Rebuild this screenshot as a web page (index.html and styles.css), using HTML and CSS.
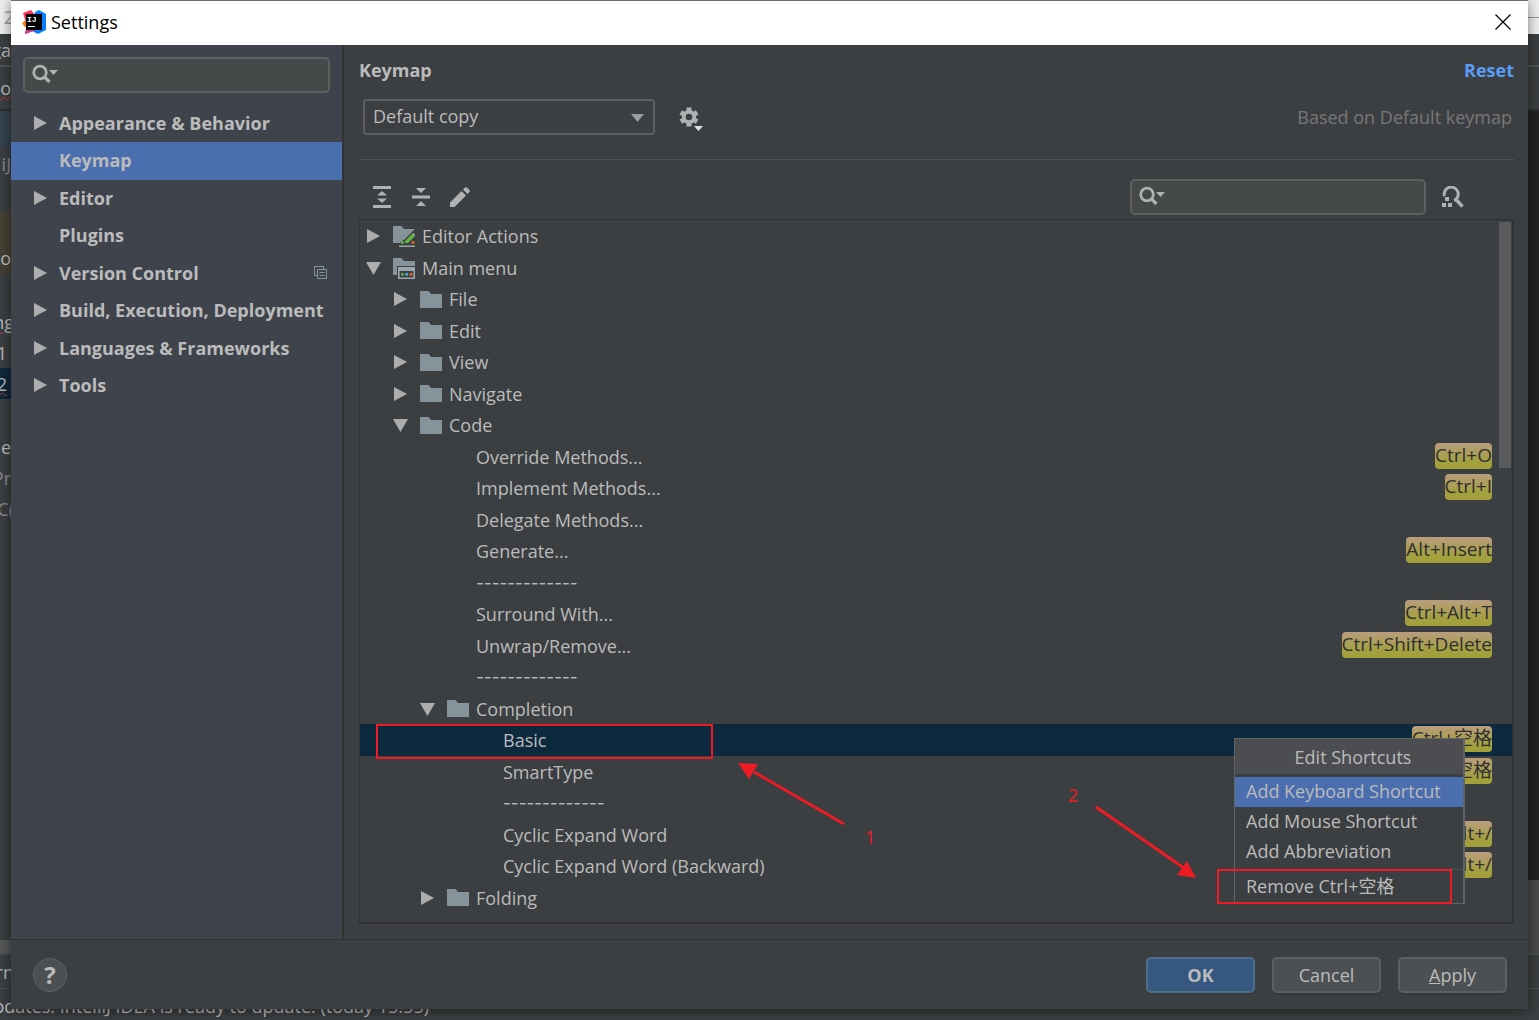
FILE: index.html
```html
<!DOCTYPE html>
<html lang="en">
<head>
<meta charset="utf-8">
<title>Settings</title>
<link rel="stylesheet" href="styles.css">
</head>
<body>
<svg class="defs" aria-hidden="true">
  <symbol id="right" viewBox="0 0 15 16"><path d="M1 1L14 8L1 15z"/></symbol>
  <symbol id="down" viewBox="0 0 15 16"><path d="M0 2H15L7.500 15z"/></symbol>
  <symbol id="folder" viewBox="0 0 22 17"><path d="M0 0H8.500L11 3H22V17H0z" fill="#87939a"/></symbol>
  <symbol id="search" viewBox="0 0 28 20"><circle cx="8" cy="8.500" r="6.300" fill="none" stroke="#afb1b3" stroke-width="2.800"/><path d="M12.500 13L17.500 18" stroke="#afb1b3" stroke-width="3.200"/><path d="M17 6H26L21.500 11z" fill="#afb1b3"/></symbol>
</svg>

<div class="backdrop" aria-hidden="true">
  <div class="edge edge-left">
    <div class="bit title-bit over">2</div>
    <div class="bit nav-bit">ga</div>
    <div class="bit tab-bit"><span class="squiggle">co</span></div>
    <div class="bit blue-bit"></div>
    <div class="bit path-bit dim">iJ</div>
    <div class="bit olive-bit">o</div>
    <div class="bit code-bit gap-above over"><span class="squiggle">ng</span></div>
    <div class="bit code-bit short">1</div>
    <div class="bit code-bit short current"><span class="squiggle">2</span></div>
    <div class="bit code-bit gap-above">ie</div>
    <div class="bit code-bit dim">Pr</div>
    <div class="bit code-bit dim over">C(</div>
    <div class="bit spacer"></div>
    <div class="bit thumb-bit"></div>
    <div class="bit tool-bit over">ern</div>
  </div>
  <div class="edge edge-right">
    <div class="bit title-bit"><i></i></div>
    <div class="bit nav-bit"></div>
    <div class="bit tab-bit"></div>
    <div class="bit dark-bit"></div>
    <div class="bit grey-bit"></div>
    <div class="bit tool-bit"></div>
  </div>
  <div class="status"><span>Updates. IntelliJ IDEA is ready to update. (today 15:55)</span></div>
</div>

<main class="dialog">
  <header class="titlebar">
    <svg class="logo" viewBox="0 0 24 24" width="24" height="24">
      <path d="M1 3L9 0L13 5L8 22L3 24L5 16z" fill="#fe315d"/>
      <path d="M0 13L5 9L8 18L3 17z" fill="#f97a12"/>
      <path d="M13 2L17 0L24 4V20L16 24L8 20z" fill="#087cfa"/>
      <path d="M3 24L4 18L14 20L9 22z" fill="#c13a8c"/>
      <rect x="4" y="4" width="16" height="16" fill="#000"/>
      <text x="5" y="12" class="logo-text">IJ</text>
      <rect x="6" y="16" width="7" height="1" fill="#fff"/>
    </svg>
    <h1>Settings</h1>
    <button class="close" aria-label="Close"><svg viewBox="0 0 16 16" width="16" height="16"><path d="M.500 .500L15.500 15.500M15.500 .500L.500 15.500" stroke="#000" stroke-width="1.200"/></svg></button>
  </header>

  <div class="columns">
    <nav class="sidebar">
      <label class="search">
        <svg width="28" height="20"><use href="#search"/></svg>
        <input type="text" aria-label="Search settings">
      </label>
      <ul class="sections">
        <li><svg class="arrow"><use href="#right"/></svg><a href="#">Appearance &amp; Behavior</a></li>
        <li class="active"><a href="#">Keymap</a></li>
        <li><svg class="arrow"><use href="#right"/></svg><a href="#">Editor</a></li>
        <li><a href="#">Plugins</a></li>
        <li><svg class="arrow"><use href="#right"/></svg><a href="#">Version Control</a>
          <svg class="project" viewBox="0 0 13 13" width="13" height="13" fill="none" stroke="#87939a"><path d="M3 9.500H.500V.500H9.500V3M3.500 3.500H12.500V12.500H3.500zM5.500 6.500H10.500M5.500 9.500H10.500"/></svg></li>
        <li><svg class="arrow"><use href="#right"/></svg><a href="#">Build, Execution, Deployment</a></li>
        <li><svg class="arrow"><use href="#right"/></svg><a href="#">Languages &amp; Frameworks</a></li>
        <li><svg class="arrow"><use href="#right"/></svg><a href="#">Tools</a></li>
      </ul>
    </nav>

    <section class="content">
      <div class="heading"><h2>Keymap</h2><a href="#" class="reset">Reset</a></div>
      <div class="scheme">
        <div class="combo">
          <select aria-label="Keymap scheme"><option>Default copy</option></select>
          <svg viewBox="0 0 13 8" width="13" height="8"><path d="M0 0H13L6.500 8z" fill="#9a9da0"/></svg>
        </div>
        <button class="icon gear" aria-label="Scheme actions">
          <svg viewBox="0 0 24 24" width="24" height="24"><g stroke="#afb1b3" stroke-width="5"><path d="M10 .500V5.500M10 14.500V19.500M1.800 5.300L6.100 7.800M13.900 12.200L18.200 14.700M1.800 14.700L6.100 12.200M13.900 7.800L18.200 5.300"/></g><circle cx="10" cy="10" r="5.200" fill="none" stroke="#afb1b3" stroke-width="3.800"/><path d="M15 19H24L19.500 24z" fill="#dfe1e3"/></svg>
        </button>
        <span class="based">Based on Default keymap</span>
      </div>
      <div class="toolbar">
        <button class="icon" aria-label="Expand all"><svg viewBox="0 0 20 22" width="20" height="22" fill="#afb1b3"><path d="M1 0H19V3H1zM1 19H19V22H1zM10 5L15 9.500H5zM10 17L15 12.500H5z"/></svg></button>
        <button class="icon" aria-label="Collapse all"><svg viewBox="0 0 20 22" width="20" height="22" fill="#afb1b3"><path d="M1 9.500H19V12.500H1zM5 2H15L10 7zM5 20H15L10 15z"/></svg></button>
        <button class="icon" aria-label="Edit shortcut"><svg viewBox="0 0 20 20" width="20" height="20" fill="#afb1b3"><path d="M0 15.500L11.500 4L16 8.500L4.500 20H0zM13 2.500L15 .500Q16 -.200 17 .500L19.500 3Q20.200 4 19.500 5L17.500 7z"/></svg></button>
        <label class="search">
          <svg width="28" height="20"><use href="#search"/></svg>
          <input type="text" aria-label="Search actions">
        </label>
        <button class="icon" aria-label="Find by shortcut"><svg viewBox="0 0 24 22" width="24" height="22"><path d="M3.500 10A7 7 0 1 1 13 14.500" fill="none" stroke="#afb1b3" stroke-width="3"/><path d="M15 13.500L21.500 20.500" stroke="#afb1b3" stroke-width="3.400"/><path d="M4 11H8V15H4zM1 17H5V21H1zM7 17H11V21H7z" fill="#afb1b3"/></svg></button>
      </div>

      <div class="tree">
        <ul class="rows">
          <li><svg class="arrow"><use href="#right"/></svg><svg class="folder" viewBox="0 0 22 22"><path d="M0 1H8.500L11 4H22L12 14L7 18H0z" fill="#87939a"/><path d="M12 16L19 9L22 11L15 18H12z" fill="#62b543"/><path d="M19 9L20.500 8L22.500 10L22 11z" fill="#9aa7b0"/><circle cx="9.500" cy="17.500" r="1.500" fill="#62b543"/><circle cx="20" cy="17.500" r="1.500" fill="#f26522"/><path d="M6 20.500H22V22H6z" fill="#9aa7b0"/></svg>Editor Actions</li>
          <li><svg class="arrow"><use href="#down"/></svg><svg class="folder" viewBox="0 0 22 22"><path d="M0 1H8.500L11 4H22V9H4V18H0z" fill="#87939a"/><path d="M5.800 10.800H21.200V21.200H5.800z" fill="#3c3f41" stroke="#9aa7b0" stroke-width="1.600"/><path d="M5 10H22V14H5z" fill="#9aa7b0"/><circle cx="9.500" cy="17.300" r="1.500" fill="#62b543"/><circle cx="13.700" cy="17.300" r="1.500" fill="#40b6e0"/><circle cx="18" cy="17.300" r="1.500" fill="#f26522"/></svg>Main menu</li>
          <li class="l1"><svg class="arrow"><use href="#right"/></svg><svg class="folder"><use href="#folder"/></svg>File</li>
          <li class="l1"><svg class="arrow"><use href="#right"/></svg><svg class="folder"><use href="#folder"/></svg>Edit</li>
          <li class="l1"><svg class="arrow"><use href="#right"/></svg><svg class="folder"><use href="#folder"/></svg>View</li>
          <li class="l1"><svg class="arrow"><use href="#right"/></svg><svg class="folder"><use href="#folder"/></svg>Navigate</li>
          <li class="l1"><svg class="arrow"><use href="#down"/></svg><svg class="folder"><use href="#folder"/></svg>Code</li>
          <li class="leaf">Override Methods...<kbd>Ctrl+O</kbd></li>
          <li class="leaf">Implement Methods...<kbd>Ctrl+I</kbd></li>
          <li class="leaf">Delegate Methods...</li>
          <li class="leaf">Generate...<kbd>Alt+Insert</kbd></li>
          <li class="leaf divider">-------------</li>
          <li class="leaf">Surround With...<kbd>Ctrl+Alt+T</kbd></li>
          <li class="leaf">Unwrap/Remove...<kbd>Ctrl+Shift+Delete</kbd></li>
          <li class="leaf divider">-------------</li>
          <li class="l2"><svg class="arrow"><use href="#down"/></svg><svg class="folder"><use href="#folder"/></svg>Completion</li>
          <li class="leaf deep selected">Basic<kbd>Ctrl+空格</kbd>
            <span class="mark mark-row"></span>
            <div class="popup" role="menu">
              <div class="popup-title">Edit Shortcuts</div>
              <button role="menuitem" class="hover">Add Keyboard Shortcut</button>
              <button role="menuitem">Add Mouse Shortcut</button>
              <button role="menuitem">Add Abbreviation</button>
              <hr>
              <button role="menuitem" class="last">Remove Ctrl+空格</button>
              <span class="mark mark-item"></span>
              <div class="callout callout-two"><span>2</span><svg viewBox="0 0 104 74" width="104" height="74"><path d="M2 2L90 63" stroke="#ed1b23" stroke-width="3"/><path d="M102 73L83 70L93 56z" fill="#ed1b23"/></svg></div>
            </div>
            <div class="callout callout-one"><svg viewBox="0 0 108 64" width="108" height="64"><path d="M106 62L16 10" stroke="#ed1b23" stroke-width="3"/><path d="M0 1L20 2L11 17z" fill="#ed1b23"/></svg><span>1</span></div>
          </li>
          <li class="leaf deep">SmartType<kbd>Ctrl+Shift+空格</kbd></li>
          <li class="leaf deep divider">-------------</li>
          <li class="leaf deep">Cyclic Expand Word<kbd>Alt+/</kbd></li>
          <li class="leaf deep">Cyclic Expand Word (Backward)<kbd>Shift+Alt+/</kbd></li>
          <li class="l2"><svg class="arrow"><use href="#right"/></svg><svg class="folder"><use href="#folder"/></svg>Folding</li>
        </ul>
        <div class="scrollbar"></div>
      </div>
    </section>
  </div>

  <footer class="footer">
    <button class="help" aria-label="Help">?</button>
    <button class="btn primary">OK</button>
    <button class="btn">Cancel</button>
    <button class="btn"><u>A</u>pply</button>
  </footer>
</main>
</body>
</html>
```

FILE: styles.css
```css
* { box-sizing: border-box; }

body {
  margin: 0;
  min-height: 100vh;
  position: relative;
  overflow: hidden;
  background: #3c3f41;
  color: #bbbbbb;
  font: 18px/24px "Open Sans", "Noto Sans CJK SC", sans-serif;
}

ul { list-style: none; margin: 0; padding: 0; }
h1, h2 { margin: 0; font-size: 18px; }
svg { display: block; flex: none; }
button, input, select { font: inherit; color: inherit; margin: 0; }
button { padding: 0; border: 0; background: none; }
a { color: inherit; text-decoration: none; }
.defs { position: absolute; width: 0; height: 0; }

/* The IDE window behind the dialog */
.backdrop {
  position: absolute;
  inset: 0;
  display: grid;
  grid-template: 1fr 31px / 11px 1fr 11px;
}
.edge { display: flex; flex-direction: column; overflow: hidden; }
.edge-right { grid-column: 3; }
.bit { display: flex; align-items: center; justify-content: flex-end; flex: none; white-space: nowrap; }
.over { margin-right: -3px; }
.short { padding-right: 4px; }
.dim { color: #8a8c8e; }
.title-bit { height: 34px; background: #f0f0f0; color: #999; }
.title-bit i { width: 100%; height: 1px; background: #999; }
.nav-bit { height: 33px; border-bottom: 2px solid #515355; }
.tab-bit { height: 44px; border-bottom: 2px solid #2d2f31; }
.blue-bit { height: 36px; background: #364350; }
.path-bit { height: 64px; align-items: flex-start; padding-top: 5px; }
.olive-bit { height: 63px; align-items: flex-end; padding-bottom: 4px; background: #454233; }
.code-bit { height: 31px; }
.gap-above { margin-top: 32px; }
.current { background: #0d293e; }
.squiggle { text-decoration: underline wavy #bc3f3c 1px; }
.spacer { flex: 1; }
.thumb-bit { height: 13px; background: #555759; }
.tool-bit { height: 36px; border-top: 2px solid #4b4d4f; border-bottom: 1px solid #4b4d4f; }
.dark-bit { flex: 1; background: #232323; }
.grey-bit { height: 73px; background: #47494b; }
.status { grid-column: 1 / -1; overflow: hidden; }
.status span { display: flex; justify-content: flex-end; width: 429px; padding-top: 5px; white-space: nowrap; }

/* Dialog */
.dialog {
  position: relative;
  margin: 0 11px;
  background: #3c3f41;
  box-shadow: 0 2px 12px rgba(0, 0, 0, .5);
}
.titlebar {
  height: 45px;
  display: flex;
  align-items: center;
  gap: 5px;
  padding: 0 17px 2px 11px;
  border-top: 1px solid #6b6b6b;
  background: #fff;
  color: #000;
}
.titlebar h1 { flex: 1; font-weight: 400; }
.logo-text { font: bold 8px "Liberation Mono", monospace; fill: #fff; }

.columns { display: flex; }
.sidebar {
  width: 333px;
  flex: none;
  padding-top: 12px;
  border-right: 2px solid #323232;
  background: #3e434c;
}
.search {
  display: flex;
  align-items: center;
  height: 36px;
  padding: 0 7px;
  border: 2px solid #5e6060;
  border-radius: 5px;
  background: #45494a;
}
.search svg { margin-bottom: 2px; }
.search input { flex: 1; min-width: 0; border: 0; outline: 0; background: none; }
.sidebar .search { margin: 0 12px; }

.sections { margin-top: 12px; font-weight: 700; }
.sections li { height: 38px; display: flex; align-items: center; padding: 0 15px 2px 22px; }
.sections li:nth-child(odd) { height: 37px; }
.sections a { flex: 1; margin-left: 11px; }
.sections a:first-child { margin-left: 26px; }
.sections .active { background: #4b6eaf; }
.arrow { width: 15px; height: 16px; fill: #adadad; }

.content { flex: 1; min-width: 0; padding: 0 14px 15px 15px; }
.heading { display: flex; justify-content: space-between; padding: 13px 0 17px; }
.reset { color: #589df6; font-weight: 700; }
.scheme {
  display: flex;
  align-items: center;
  padding: 0 2px 24px 4px;
  border-bottom: 1px solid #515151;
}
.combo { position: relative; width: 292px; height: 36px; }
.combo select {
  width: 100%;
  height: 100%;
  padding: 0 8px 2px;
  appearance: none;
  border: 2px solid #5e6060;
  border-radius: 4px;
  background: #3c3f41;
}
.combo svg { position: absolute; right: 11px; top: 15px; pointer-events: none; }
.gear { margin: 4px 0 0 24px; }
.based { margin-left: auto; }
.based { color: #777777; }

.toolbar { display: flex; align-items: center; gap: 19px; padding: 19px 49px 4px 13px; }
.toolbar .search { width: 296px; margin-left: auto; }
.toolbar .search + .icon { margin-left: -4px; }

.tree {
  position: relative;
  padding-bottom: 9px;
  border: 1px solid #323232;
  border-width: 1px 2px 2px 1px;
}
.rows li {
  position: relative;
  height: 31px;
  display: flex;
  align-items: center;
  padding: 0 20px 0 6px;
}
.rows li:nth-child(odd) { height: 32px; }
.rows .l1 { padding-left: 33px; }
.rows .l2 { padding-left: 60px; }
.rows .leaf { padding-left: 116px; }
.rows .deep { padding-left: 143px; }
.rows .selected { background: #0d293e; }
.rows .divider { font-family: Inter, sans-serif; font-size: 17px; }
.folder { width: 22px; height: 17px; margin: 0 7px 0 12px; }
.folder[viewBox] { height: 22px; }
kbd {
  align-self: flex-start;
  height: 26px;
  margin: 2px 0 0 auto;
  border-radius: 4px;
  background: linear-gradient(#b99d7e, #a3a040 70%, #a3a03a);
  color: #2f2f2f;
  font: inherit;
  font-size: 19px;
}
.scrollbar {
  position: absolute;
  top: 2px;
  right: 1px;
  width: 12px;
  height: 246px;
  background: #595b5d;
}

/* Shortcut menu */
.popup {
  position: absolute;
  z-index: 1;
  top: 14px;
  right: 47px;
  width: 231px;
  border: 1px solid #616365;
  border-right-width: 2px;
  background: #3c3f41;
}
.popup-title { padding: 6px 0 5px 8px; margin-bottom: 3px; text-align: center; background: #4b4d51; }
.popup button { display: block; width: 100%; height: 30px; padding: 0 0 2px 11px; text-align: left; }
.popup .hover { background: #4b6eaf; }
.popup hr { margin: 2px 0 1px; border: 0; border-top: 1px solid #515151; }
.popup .last { height: 32px; }

/* Annotations */
.mark { position: absolute; border: 2px solid #ed1b23; }
.mark-row { top: 0; left: 16px; width: 337px; height: 35px; }
.mark-item { left: -18px; bottom: -1px; width: 235px; height: 35px; }
.callout { position: absolute; z-index: 1; display: flex; color: #ed1b23; }
.callout-one { top: 38px; left: 378px; gap: 19px; align-items: flex-end; }
.callout-one span { margin-bottom: -23px; }
.callout-two { top: 44px; left: -167px; gap: 16px; }
.callout-two svg { margin-top: 22px; }

.footer {
  display: flex;
  align-items: center;
  gap: 17px;
  padding: 17px 21px 16px 22px;
  border-top: 1px solid #323232;
}
.help {
  width: 34px;
  height: 34px;
  margin-right: auto;
  border: 1px solid #5e6060;
  border-radius: 50%;
  background: #4c5052;
  font-size: 24px;
  font-weight: 700;
}
.btn {
  width: 109px;
  height: 36px;
  border: 2px solid #5e6060;
  border-radius: 5px;
  background: #4c5052;
  box-shadow: 0 2px 0 #37393b;
}
.primary { border-color: #4c708c; background: #365880; font-weight: 700; }
```
